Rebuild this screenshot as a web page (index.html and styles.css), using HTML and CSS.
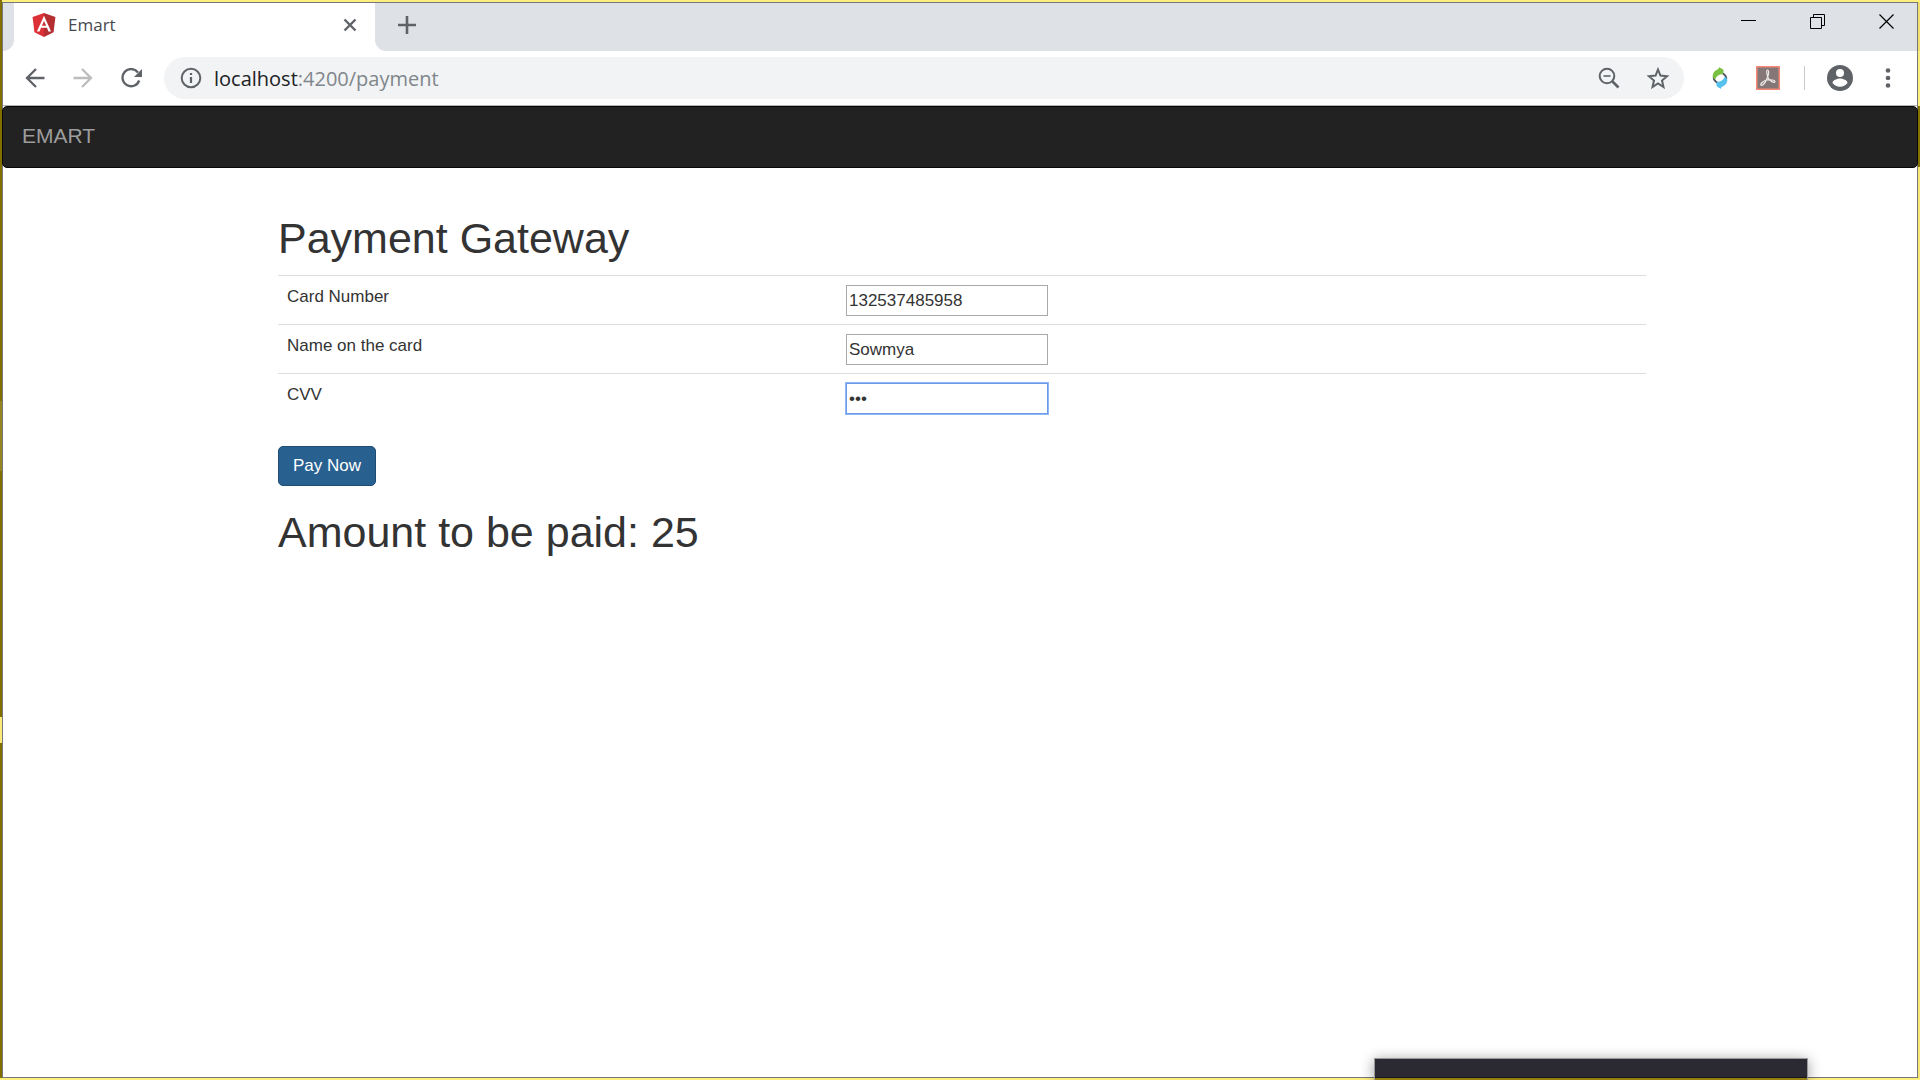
FILE: index.html
```html
<!DOCTYPE html>
<html lang="en">
<head>
<meta charset="utf-8">
<title>Emart</title>
<link rel="stylesheet" href="styles.css">
</head>
<body>
<div class="edge edge-left"><i class="edge-mid"></i><i class="edge-bright"></i></div>
<div class="window">
  <header class="tabstrip">
    <div class="previous-tab"></div>
    <div class="tab">
      <svg class="favicon" viewBox="0 0 24 24"><path fill="#dd2f36" d="M12 0 .6 4l1.8 15.2L12 24z"/><path fill="#b52e31" d="m12 0 11.4 4-1.8 15.2L12 24z"/><path fill="#fff" d="M12 2.8 4.9 18.4h2.7L9 14.8h6l1.4 3.6h2.7zm0 5.1 2.2 4.8H9.9z"/></svg>
      <span class="tab-title">Emart</span>
      <button class="icon-button tab-close" aria-label="Close tab"><svg width="14" height="14" viewBox="0 0 14 14"><path d="m1.5 1.5 11 11m0-11-11 11" fill="none" stroke="#5f6368" stroke-width="2.4"/></svg></button>
    </div>
    <div class="strip-rest">
      <button class="icon-button" aria-label="New tab"><svg width="18" height="18" viewBox="0 0 18 18"><path d="M9 0v18M0 9h18" fill="none" stroke="#5f6368" stroke-width="2.6"/></svg></button>
      <div class="window-controls">
        <button class="icon-button" aria-label="Minimize"><svg width="15" height="15" viewBox="0 0 15 15"><path d="M0 6.5h15" stroke="#000"/></svg></button>
        <button class="icon-button" aria-label="Restore"><svg width="15" height="15" viewBox="0 0 15 15"><path d="M.5 3.5h11v11H.5zM3.5 3.5v-3h11v11h-3" fill="none" stroke="#000"/></svg></button>
        <button class="icon-button" aria-label="Close"><svg width="15" height="15" viewBox="0 0 15 15"><path d="m.5.5 14 14m0-14-14 14" stroke="#000" stroke-width="1.2"/></svg></button>
      </div>
    </div>
  </header>
  <div class="toolbar">
    <button class="icon-button" aria-label="Back"><svg width="20" height="20" viewBox="0 0 20 20"><path d="M19.5 10H2m9-9-9 9 9 9" fill="none" stroke="#5f6368" stroke-width="2.3"/></svg></button>
    <button class="icon-button" aria-label="Forward"><svg width="20" height="20" viewBox="0 0 20 20"><path d="M.5 10H18M9 1l9 9-9 9" fill="none" stroke="#babcbe" stroke-width="2.3"/></svg></button>
    <button class="icon-button" aria-label="Reload"><svg width="21" height="20" viewBox="0 0 21 20"><path d="M17 4.500A8.600 8.600 0 1 0 18.200 12.500" fill="none" stroke="#5f6368" stroke-width="2.300"/><path d="M21 1v8h-8z" fill="#5f6368"/></svg></button>
    <div class="omnibox">
      <svg width="22" height="22" viewBox="0 0 22 22"><circle cx="11" cy="11" r="9.3" fill="none" stroke="#5f6368" stroke-width="2"/><path d="M11 10v6M11 6v2" stroke="#5f6368" stroke-width="2.2"/></svg>
      <div class="url"><b>localhost</b>:4200/payment</div>
      <button class="icon-button" aria-label="Zoom"><svg width="22" height="22" viewBox="0 0 22 22"><circle cx="9" cy="9" r="7.3" fill="none" stroke="#5f6368" stroke-width="2"/><path d="M5.5 9h7" stroke="#5f6368" stroke-width="1.6"/><path d="m14 14 6.5 6.5" stroke="#5f6368" stroke-width="2.6"/></svg></button>
      <button class="icon-button" aria-label="Bookmark"><svg width="24" height="22" viewBox="0 0 24 22"><path d="m12 2.5 2.4 6.1 6.6.6-5 4.300 1.500 6.500-5.500-3.500L6.500 20 8 13.500 3 9.200l6.600-.6z" fill="none" stroke="#5f6368" stroke-width="2"/></svg></button>
    </div>
    <div class="extensions">
      <svg width="16" height="24" viewBox="0 0 16 24"><path d="M2 9.500C1 13 3 15.500 6 17M14 14.500C15 11 13 8.500 10 7" fill="none" stroke="#46505a" stroke-width="1.8"/><path d="M7.500 1c.8 1.500 3.500 1.500 4 3.500.3 1.200 0 2.500-.5 3.500-4 .2-6.500 2-8 5.500C-.5 11 .5 7 3 5c2-1.500 4-2 4.500-4z" fill="#7ac143"/><path d="M8.500 23c-.8-1.500-3.500-1.500-4-3.500-.3-1.200 0-2.500.5-3.500 4-.2 6.500-2 8-5.500 3.500 2.500 2.500 6.500 0 8.500-2 1.500-4 2-4.500 4z" fill="#55c1ec"/></svg>
      <svg width="24" height="24" viewBox="0 0 24 24"><path fill="#857777" stroke="#f78777" stroke-width="1.5" d="M.75.75h22.500v22.500H.75z"/><path d="M11.500 4c1.700 0 1.300 3.500.5 6-1.500 4.500-4.500 9-6.500 9.500C3 19 7 14.500 11 14c4-.5 8 0 8 1.500-.5 2-4.500 0-6.500-3C11 10 10 4.500 11.500 4z" fill="none" stroke="#eee9e9" stroke-width="1.2"/></svg>
      <i class="divider"></i>
      <svg width="26" height="26" viewBox="0 0 26 26"><circle cx="13" cy="13" r="13" fill="#5f6368"/><circle cx="13" cy="8" r="4" fill="#fff"/><path d="M5.500 18c0-3 5-4.500 7.500-4.500s7.500 1.500 7.500 4.500a9.500 9.500 0 0 1-15 0z" fill="#fff"/></svg>
      <svg width="6" height="20" viewBox="0 0 6 20"><g fill="#5f6368"><circle cx="3" cy="2.5" r="2.3"/><circle cx="3" cy="10" r="2.3"/><circle cx="3" cy="17.5" r="2.3"/></g></svg>
    </div>
  </div>
  <div class="page">
    <nav class="navbar"><a href="#">EMART</a></nav>
    <main class="container">
      <h1>Payment Gateway</h1>
      <form>
        <table class="table">
          <tr><td><label for="card">Card Number</label></td><td><input id="card" type="text" value="132537485958"></td></tr>
          <tr><td><label for="name">Name on the card</label></td><td><input id="name" type="text" value="Sowmya"></td></tr>
          <tr><td><label for="cvv">CVV</label></td><td><input id="cvv" class="is-focused" type="password" value="123"></td></tr>
        </table>
        <button class="pay" type="button">Pay Now</button>
      </form>
      <h1>Amount to be paid: 25</h1>
    </main>
  </div>
</div>
<div class="edge edge-right"></div>
<div class="popup"></div>
</body>
</html>
```
FILE: styles.css
```css
* { box-sizing: border-box; }
body {
  margin: 0;
  min-height: 100vh;
  display: grid;
  grid-template-columns: 2px minmax(0, 1fr) 2px;
  padding: 2px 0;
  background: #ffee80;
  color: #333;
  font: 17px/24px "Liberation Sans", Arial, sans-serif;
  position: relative;
  overflow: hidden;
}
svg { display: block; flex: none; }
.edge { display: flex; flex-direction: column; }
.edge-left { background: #806f00; margin: -2px 0 0; padding-top: 401px; }
.edge-mid { height: 70px; background: #968420; }
.edge-bright { height: 26px; margin-top: 246px; background: #ffe97a; }
.edge-right { background: linear-gradient(#f2e070 49px, #ffee80 49px 104px, #857300 104px 165px, #f8e678 165px); }
.window {
  border: 1px solid #777;
  background: #fff;
  display: flex;
  flex-direction: column;
}
.icon-button { display: flex; padding: 0; border: 0; background: none; }
.tabstrip { display: flex; height: 48px; }
.previous-tab { width: 11px; background: #dee1e6; border-bottom-right-radius: 11px; }
.tab {
  width: 361px;
  padding: 0 18px 4px 18px;
  display: flex;
  align-items: center;
  background: #fff;
}
.favicon { width: 24px; height: 24px; }
.tab-title { margin-left: 12px; font: 17px/24px "Open Sans", "Noto Sans", sans-serif; color: #45494d; }
.tab-close { margin-left: auto; }
.strip-rest {
  flex: 1;
  display: flex;
  justify-content: space-between;
  align-items: center;
  padding: 0 23px 4px 23px;
  background: #dee1e6;
  border-bottom-left-radius: 11px;
}
.window-controls { display: flex; gap: 54px; padding-bottom: 7px; }
.toolbar {
  display: flex;
  align-items: center;
  height: 55px;
  padding: 0 26px 0 22px;
  gap: 28px;
  border-bottom: 1px solid #b5b5b5;
}
.omnibox {
  flex: 1;
  height: 42px;
  margin-left: -6px;
  border-radius: 21px;
  background: #f1f3f4;
  display: flex;
  align-items: center;
  gap: 26px;
  padding: 0 14px 0 16px;
}
.url { flex: 1; margin-left: -14px; padding-top: 1px; font: 20px/28px "Open Sans", "Noto Sans", sans-serif; color: #80868b; }
.url b { font-weight: 400; color: #202124; }
.extensions { display: flex; align-items: center; gap: 22px; }
.extensions svg:first-child { margin-right: 6px; }
.divider { width: 1px; height: 24px; margin-left: 2px; background: #c8cace; }
.extensions svg:last-child { margin-left: 10px; }
.navbar {
  height: 62px;
  margin: 0 -1px;
  padding: 0 19px 2px;
  display: flex;
  align-items: center;
  background: #222;
  border: 1px solid #080808;
  border-radius: 5px;
}
.navbar a { font-size: 21px; color: #9d9d9d; text-decoration: none; }
.container { width: 1372px; max-width: 95%; margin: 0 auto; padding: 47px 0 0 4px; }
h1 { margin: 0 0 13px; font-size: 43px; line-height: 47px; font-weight: 400; }
.table { width: 100%; border-collapse: collapse; margin-bottom: 24px; }
td { padding: 9px 9px 8px; border-top: 1px solid #ddd; vertical-align: top; }
td:first-child { width: 559px; }
td input {
  display: block;
  width: 202px;
  height: 31px;
  padding: 1px 2px;
  border: 1px solid #a9a9a9;
  background: #fff;
  color: #333;
  font: inherit;
}
td .is-focused { border-color: #6b9ae8; box-shadow: 0 0 0 1px #8fb6f5; }
.pay {
  display: block;
  height: 40px;
  padding: 0 14px;
  margin-bottom: 23px;
  border: 1px solid #204d74;
  border-radius: 5px;
  background: #286090;
  color: #fff;
  font: inherit;
}
.popup {
  position: absolute;
  right: 112px;
  bottom: 0;
  width: 434px;
  height: 22px;
  border: 1px solid #999;
  border-bottom: 0;
  background: linear-gradient(#2b2a33 18px, #17161b 18px 19px, #95800f 19px);
  box-shadow: 0 2px 14px rgba(0, 0, 0, .4);
}
```
